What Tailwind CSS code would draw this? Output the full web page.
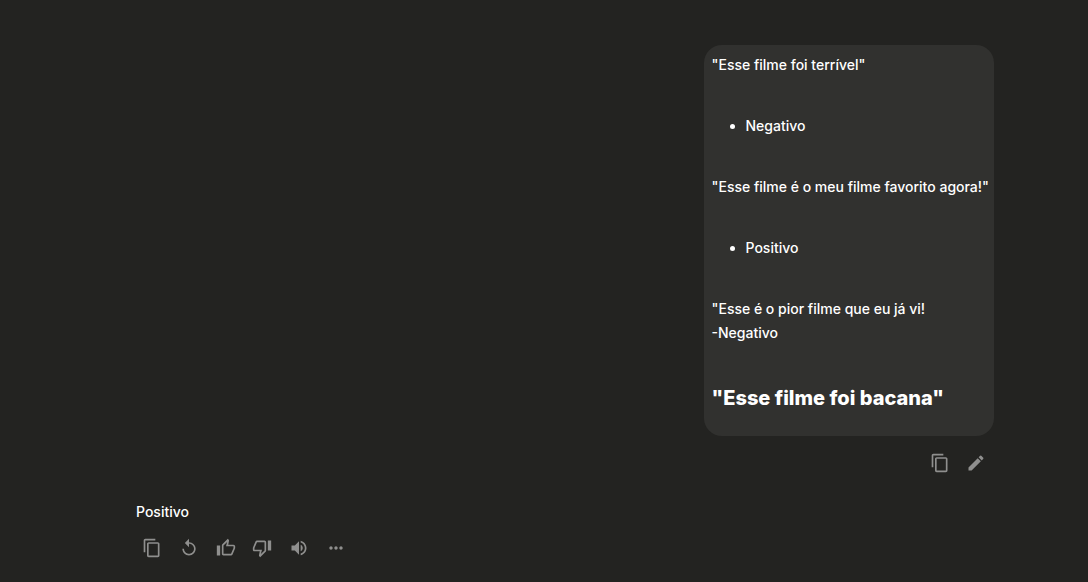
<!DOCTYPE html>
<html lang="pt-BR">
<head>
<meta charset="utf-8">
<meta name="viewport" content="width=device-width, initial-scale=1">
<title>Conversa</title>
<script src="https://cdn.jsdelivr.net/npm/@tailwindcss/browser@4"></script>
</head>
<body class="min-h-screen bg-[#232321] font-['Inter','Noto_Sans',sans-serif] text-sm leading-6 font-medium text-white">
<svg class="hidden" aria-hidden="true">
  <symbol id="copy" viewBox="0 0 24 24"><path d="M16 1H4c-1.1 0-2 .9-2 2v14h2V3h12V1zm3 4H8c-1.1 0-2 .9-2 2v14c0 1.1.9 2 2 2h11c1.1 0 2-.9 2-2V7c0-1.1-.9-2-2-2zm0 16H8V7h11v14z"/></symbol>
</svg>
<main class="flex flex-col pt-[45px] pr-[94px] pl-[136px]">
  <section class="flex flex-col items-end">
    <div class="rounded-[18px] bg-[#31312f] pt-2 pr-[5px] pb-[22px] pl-2">
      <p>"Esse filme foi terrível"</p>
      <ul class="my-[37px] list-disc pl-[34px]"><li>Negativo</li></ul>
      <p>"Esse filme é o meu filme favorito agora!"</p>
      <ul class="my-[37px] list-disc pl-[34px]"><li>Positivo</li></ul>
      <p>"Esse é o pior filme que eu já vi!<br>-Negativo</p>
      <h2 class="mt-[37px] text-xl leading-8 font-extrabold">"Esse filme foi bacana"</h2>
    </div>
    <div class="mt-[9px] flex text-[#8f8f8e]">
      <button type="button" aria-label="Copiar" class="grid size-9 place-items-center"><svg class="size-5 fill-current"><use href="#copy"/></svg></button>
      <button type="button" aria-label="Editar" class="grid size-9 place-items-center"><svg class="size-5 fill-current" viewBox="0 0 24 24"><path d="M3 17.25V21h3.75L17.81 9.94l-3.75-3.75L3 17.25zM20.71 7.04c.39-.39.39-1.02 0-1.41l-2.34-2.34a.9959.9959 0 0 0-1.41 0l-1.83 1.83 3.75 3.75 1.83-1.83z"/></svg></button>
    </div>
  </section>
  <section class="mt-[19px]">
    <p>Positivo</p>
    <div class="mt-1.5 -ml-0.5 grid w-[220px] grid-cols-6 text-[#8f8f8e]">
      <button type="button" aria-label="Copiar" class="grid h-9 place-items-center"><svg class="size-5 fill-current"><use href="#copy"/></svg></button>
      <button type="button" aria-label="Gerar novamente" class="grid h-9 place-items-center"><svg class="size-5 fill-current" viewBox="0 0 24 24"><path d="M12 5V1L7 6l5 5V7c3.31 0 6 2.69 6 6s-2.69 6-6 6-6-2.69-6-6H4c0 4.42 3.58 8 8 8s8-3.58 8-8-3.58-8-8-8z"/></svg></button>
      <button type="button" aria-label="Gostei" class="grid h-9 place-items-center"><svg class="size-5 fill-current" viewBox="0 0 24 24"><path d="M9 21h9c.83 0 1.54-.5 1.84-1.22l3.02-7.05c.09-.23.14-.47.14-.73v-2c0-1.1-.9-2-2-2h-6.31l.95-4.57.03-.32c0-.41-.17-.79-.44-1.06L14.17 1 7.58 7.59C7.22 7.95 7 8.45 7 9v10c0 1.1.9 2 2 2zM9 9l4.34-4.34L12 10h9v2l-3 7H9V9zM1 9h4v12H1z"/></svg></button>
      <button type="button" aria-label="Não gostei" class="grid h-9 place-items-center"><svg class="size-5 fill-current" viewBox="0 0 24 24"><path d="M15 3H6c-.83 0-1.54.5-1.84 1.22l-3.02 7.05c-.09.23-.14.47-.14.73v2c0 1.1.9 2 2 2h6.31l-.95 4.57-.03.32c0 .41.17.79.44 1.06L9.83 23l6.59-6.59c.36-.36.58-.86.58-1.41V5c0-1.1-.9-2-2-2zm0 12-4.34 4.34L12 14H3v-2l3-7h9v10zm4-12h4v12h-4z"/></svg></button>
      <button type="button" aria-label="Ouvir" class="grid h-9 place-items-center"><svg class="size-5 fill-current" viewBox="0 0 24 24"><path d="M3 9v6h4l5 5V4L7 9H3zm13.5 3c0-1.77-1.02-3.29-2.5-4.03v8.05c1.48-.73 2.5-2.25 2.5-4.02zM14 3.23v2.06c2.89.86 5 3.54 5 6.71s-2.11 5.85-5 6.71v2.06c4.01-.91 7-4.49 7-8.77s-2.99-7.86-7-8.77z"/></svg></button>
      <button type="button" aria-label="Mais opções" class="grid h-9 place-items-center"><svg class="size-5 fill-current" viewBox="0 0 24 24"><path d="M6 10c-1.1 0-2 .9-2 2s.9 2 2 2 2-.9 2-2-.9-2-2-2zm12 0c-1.1 0-2 .9-2 2s.9 2 2 2 2-.9 2-2-.9-2-2-2zm-6 0c-1.1 0-2 .9-2 2s.9 2 2 2 2-.9 2-2-.9-2-2-2z"/></svg></button>
    </div>
  </section>
</main>
</body>
</html>
